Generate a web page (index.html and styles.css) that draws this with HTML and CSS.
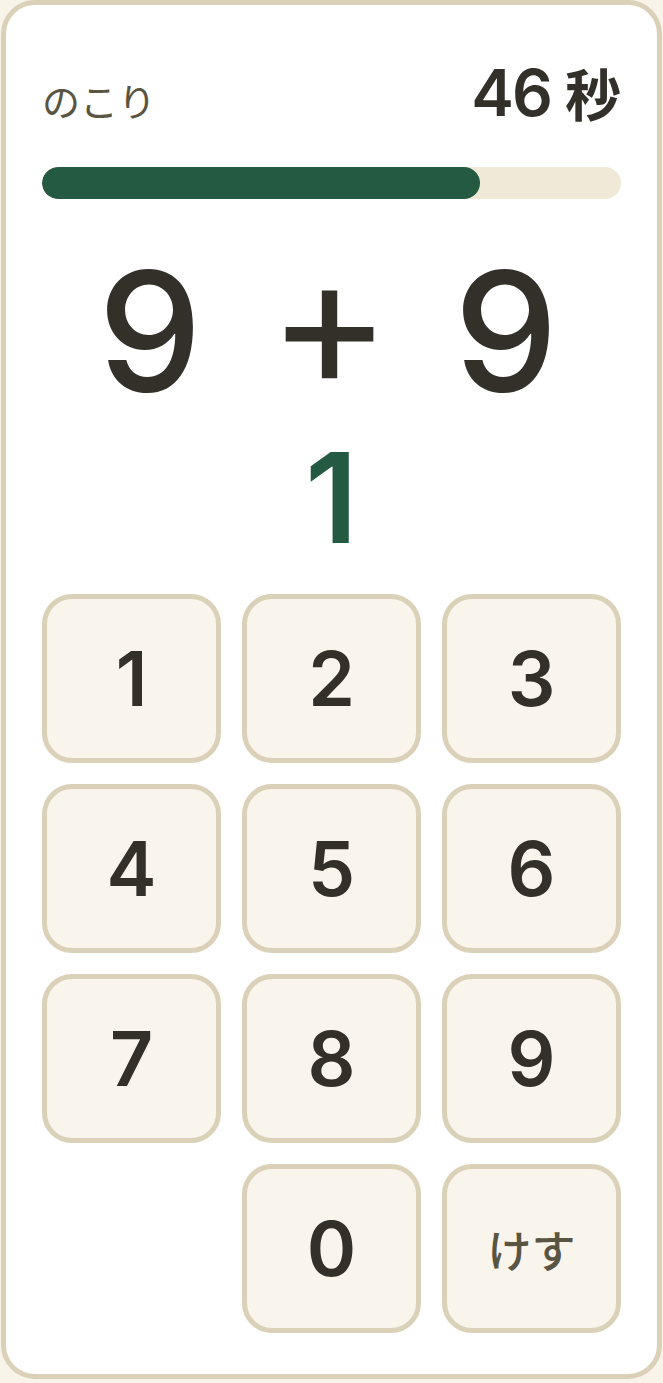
FILE: index.html
```html
<!DOCTYPE html>
<html lang="ja">
<head>
    <meta charset="UTF-8">
    <meta name="viewport" content="width=device-width, initial-scale=1.0">
    <title>たしざん</title>
    <link rel="stylesheet" href="styles.css">
</head>
<body>
    <div class="card">
        <div class="top">
            <span class="label">のこり</span>
            <span class="time">46 <span class="unit">秒</span></span>
        </div>
        <div class="bar">
            <div class="bar-fill" style="width: 75.6%"></div>
        </div>
        <div class="question">
            <span>9</span>
            <span class="op">+</span>
            <span>9</span>
        </div>
        <div class="answer">1</div>
        <div class="keypad">
            <button class="key">1</button>
            <button class="key">2</button>
            <button class="key">3</button>
            <button class="key">4</button>
            <button class="key">5</button>
            <button class="key">6</button>
            <button class="key">7</button>
            <button class="key">8</button>
            <button class="key">9</button>
            <button class="key key-zero">0</button>
            <button class="key key-clear">けす</button>
        </div>
    </div>
</body>
</html>
```

FILE: styles.css
```css
body {
    margin: 0;
    padding: 0;
    background-color: #f8f4ea;
    font-family: Inter, "Noto Sans CJK JP", sans-serif;
    color: #33302a;
}
.card {
    margin: 0 1px 2px;
    padding: 56px 36px 41px;
    background-color: #ffffff;
    border: 5px solid #dbd0b8;
    border-radius: 34px;
}
.top {
    display: flex;
    justify-content: space-between;
    align-items: baseline;
    line-height: 1;
}
.label {
    font-family: "Noto Sans CJK JP", sans-serif;
    font-size: 38px;
    font-weight: 400;
    color: #5a5443;
}
.time {
    font-size: 64px;
    font-weight: 600;
    letter-spacing: -2px;
}
.unit {
    font-family: "Noto Sans CJK JP", sans-serif;
    font-size: 56px;
    font-weight: 700;
    letter-spacing: 0;
}
.bar {
    margin-top: 42px;
    height: 32px;
    background-color: #f1e9d8;
    border-radius: 16px;
    overflow: hidden;
}
.bar-fill {
    height: 100%;
    background-color: #245a42;
    border-radius: 16px;
}
.question {
    margin-top: 50px;
    padding-right: 7px;
    display: flex;
    justify-content: center;
    gap: 58px;
    font-size: 165px;
    font-weight: 500;
    line-height: 1;
}
.question span {
    width: 120px;
    text-align: center;
}
.question .op {
    font-size: 186px;
    font-weight: 400;
    line-height: 142px;
}
.answer {
    margin-top: 21px;
    text-align: center;
    font-size: 125px;
    font-weight: 600;
    line-height: 1;
    color: #245a42;
}
.keypad {
    margin-top: 34px;
    display: grid;
    grid-template-columns: repeat(3, 1fr);
    grid-auto-rows: 169px;
    gap: 21px;
}
.key {
    display: flex;
    align-items: center;
    justify-content: center;
    padding: 0;
    background-color: #f9f5ec;
    border: 5px solid #dbd0b8;
    border-radius: 30px;
    font-family: inherit;
    font-size: 75px;
    font-weight: 600;
    line-height: 1;
    color: #33302a;
}
.key-zero {
    grid-column-start: 2;
}
.key-clear {
    font-family: "Noto Sans CJK JP", sans-serif;
    font-size: 44px;
    font-weight: 500;
    color: #5a5443;
}
```
